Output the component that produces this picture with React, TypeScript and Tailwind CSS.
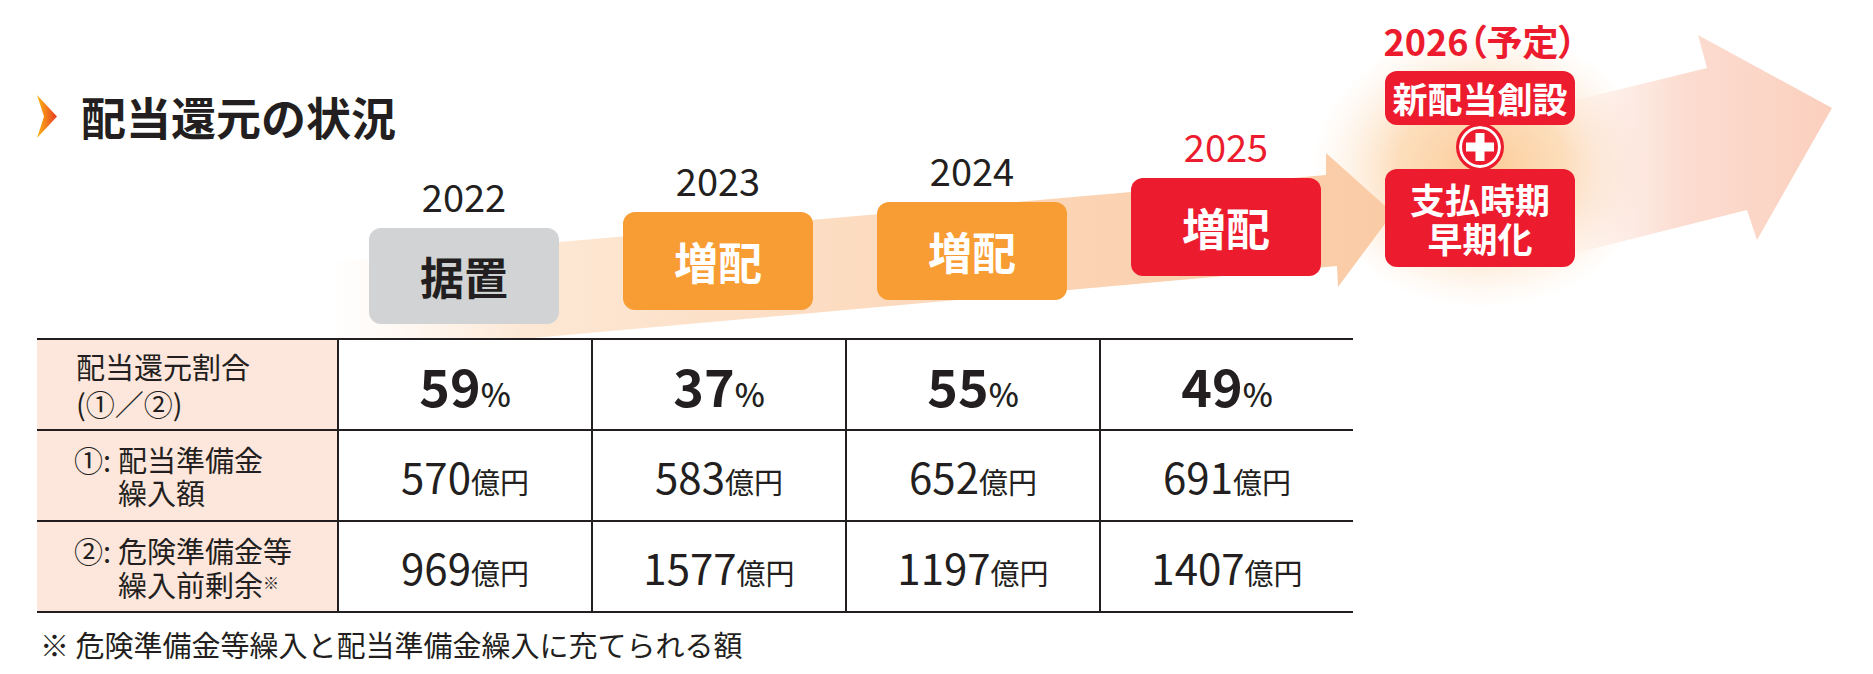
const font = "font-['Noto_Sans_CJK_JP','Noto_Sans',sans-serif]";

type Year = {
  year: string;
  label: string;
  top: string;
  yearColor: string;
  box: string;
  h: string;
};

const years: Year[] = [
  { year: "2022", label: "据置", top: "mt-[178px]", yearColor: "text-[#231f20]", box: "bg-[#d1d3d4] text-[#231f20]", h: "h-[96px]" },
  { year: "2023", label: "増配", top: "mt-[162px]", yearColor: "text-[#231f20]", box: "bg-[#f89d33] text-white", h: "h-[98px]" },
  { year: "2024", label: "増配", top: "mt-[152px]", yearColor: "text-[#231f20]", box: "bg-[#f89d33] text-white", h: "h-[98px]" },
  { year: "2025", label: "増配", top: "mt-[128px]", yearColor: "text-[#ec1c2e]", box: "bg-[#ec1c2e] text-white", h: "h-[98px]" },
];

const pct = ["59", "37", "55", "49"];
const reserve = ["570", "583", "652", "691"];
const surplus = ["969", "1577", "1197", "1407"];

function Chevron() {
  return (
    <svg className="shrink-0" width="20" height="43" viewBox="0 0 20 43">
      <defs>
        <linearGradient id="chev" x1="0" y1="0" x2="1" y2="0">
          <stop offset="0" stopColor="#fdb515" />
          <stop offset="1" stopColor="#e63a22" />
        </linearGradient>
      </defs>
      <polygon points="0,0 20,21.5 0,43 7,21.5" fill="url(#chev)" />
    </svg>
  );
}

// arrows and glow behind the year boxes
function Backdrop() {
  return (
    <svg className="pointer-events-none absolute inset-0" width="1873" height="674" viewBox="0 0 1873 674">
      <defs>
        <radialGradient id="glow">
          <stop offset="0" stopColor="#fbc891" stopOpacity="0.95" />
          <stop offset="0.5" stopColor="#fcd3a6" stopOpacity="0.75" />
          <stop offset="1" stopColor="#fde6cf" stopOpacity="0" />
        </radialGradient>
        <linearGradient id="band" gradientUnits="userSpaceOnUse" x1="330" y1="0" x2="1395" y2="0">
          <stop offset="0" stopColor="#fdeee2" stopOpacity="0" />
          <stop offset="0.18" stopColor="#fde8d5" />
          <stop offset="0.6" stopColor="#fcd7b9" />
          <stop offset="1" stopColor="#facba5" />
        </linearGradient>
        <linearGradient id="big" gradientUnits="userSpaceOnUse" x1="1560" y1="0" x2="1835" y2="0">
          <stop offset="0" stopColor="#fbd6c8" stopOpacity="0" />
          <stop offset="0.45" stopColor="#fbd6c8" stopOpacity="0.85" />
          <stop offset="1" stopColor="#fbcfbd" />
        </linearGradient>
      </defs>
      <ellipse cx="1482" cy="168" rx="170" ry="140" fill="url(#glow)" />
      <polygon
        points="330,262 1326,175 1326,153 1393,213 1338,287 1337,266 533,338 330,338"
        fill="url(#band)"
      />
      <polygon
        points="1560,104 1707,68 1698,35 1832,108 1757,240 1747,210 1560,257"
        fill="url(#big)"
      />
    </svg>
  );
}

function YearColumn({ y }: { y: Year }) {
  return (
    <div className={`flex w-[254px] shrink-0 flex-col items-center ${y.top}`}>
      <div className={`h-[36px] text-[38px] leading-[36px] ${y.yearColor}`}>{y.year}</div>
      <div
        className={`mt-[14px] flex w-[190px] items-center justify-center rounded-[12px] text-[44px] font-bold ${y.h} ${y.box}`}
      >
        {y.label}
      </div>
    </div>
  );
}

function PlanColumn() {
  return (
    <div className="mt-[22px] flex w-[254px] shrink-0 flex-col items-center">
      <div className="h-[36px] text-[36px] font-bold leading-[36px] text-[#ec1c2e] [font-feature-settings:'palt']">
        2026（予定）
      </div>
      <div className="mt-[13px] flex h-[54px] w-[190px] items-center justify-center rounded-[12px] bg-[#ec1c2e] text-[35px] font-bold text-white">
        新配当創設
      </div>
      <div className="relative z-10 -my-[2px] flex h-[48px] w-[48px] shrink-0 items-center justify-center rounded-full border-[3px] border-[#ec1c2e] bg-[#ec1c2e] shadow-[inset_0_0_0_3px_#ffffff]">
        <svg className="shrink-0" width="28" height="28" viewBox="0 0 28 28">
          <rect x="9.5" y="0" width="9" height="28" fill="white" />
          <rect x="0" y="9.5" width="28" height="9" fill="white" />
        </svg>
      </div>
      <div className="flex h-[98px] w-[190px] flex-col items-center justify-center rounded-[12px] bg-[#ec1c2e] text-[35px] font-bold leading-[39px] text-white">
        <span>支払時期</span>
        <span>早期化</span>
      </div>
    </div>
  );
}

function Label({ children }: { children: React.ReactNode }) {
  return <div className="flex h-[89px] items-center bg-[#fde6dc]">{children}</div>;
}

function Cell({ children }: { children: React.ReactNode }) {
  return (
    <div className="flex h-[89px] items-center justify-center border-l-2 border-[#231f20] bg-white">
      {children}
    </div>
  );
}

function Yen({ n }: { n: string }) {
  return (
    <span className="text-[42px] leading-none">
      {n}
      <span className="text-[29px]">億円</span>
    </span>
  );
}

export default function App() {
  return (
    <div className={`relative h-[674px] w-[1873px] overflow-hidden bg-white text-[#231f20] ${font}`}>
      <Backdrop />
      <div className="relative pl-[37px]">
        <div className="flex h-[338px] items-start">
          <div className="mt-[94px] flex h-[44px] w-[300px] shrink-0 items-center gap-[24px] whitespace-nowrap">
            <Chevron />
            <h1 className="text-[45px] font-bold leading-none">配当還元の状況</h1>
          </div>
          {years.map((y) => (
            <YearColumn key={y.year} y={y} />
          ))}
          <PlanColumn />
        </div>

        <div className="grid w-[1316px] grid-cols-[300px_repeat(4,254px)] border-y-2 border-[#231f20] text-[29px]">
          <Label>
            <div className="pl-[39px] leading-[37px]">
              配当還元割合
              <br />
              (①／②)
            </div>
          </Label>
          {pct.map((p) => (
            <Cell key={p}>
              <span className="text-[52px] font-bold leading-none">
                {p}
                <span className="text-[32px] font-medium">%</span>
              </span>
            </Cell>
          ))}
        </div>
        <div className="grid w-[1316px] grid-cols-[300px_repeat(4,254px)] border-b-2 border-[#231f20] text-[29px]">
          <Label>
            <div className="flex pl-[37px] leading-[33px]">
              <span className="flex w-[44px] shrink-0">
                <span>①</span>
                <span>:</span>
              </span>
              <span>
                配当準備金
                <br />
                繰入額
              </span>
            </div>
          </Label>
          {reserve.map((v) => (
            <Cell key={v}>
              <Yen n={v} />
            </Cell>
          ))}
        </div>
        <div className="grid w-[1316px] grid-cols-[300px_repeat(4,254px)] border-b-2 border-[#231f20] text-[29px]">
          <Label>
            <div className="flex pl-[37px] leading-[34px]">
              <span className="flex w-[44px] shrink-0">
                <span>②</span>
                <span>:</span>
              </span>
              <span>
                危険準備金等
                <br />
                繰入前剰余<sup className="text-[16px]">※</sup>
              </span>
            </div>
          </Label>
          {surplus.map((v) => (
            <Cell key={v}>
              <Yen n={v} />
            </Cell>
          ))}
        </div>

        <p className="mt-[12px] pl-[3px] text-[29px] leading-[38px]">
          ※ 危険準備金等繰入と配当準備金繰入に充てられる額
        </p>
      </div>
    </div>
  );
}
